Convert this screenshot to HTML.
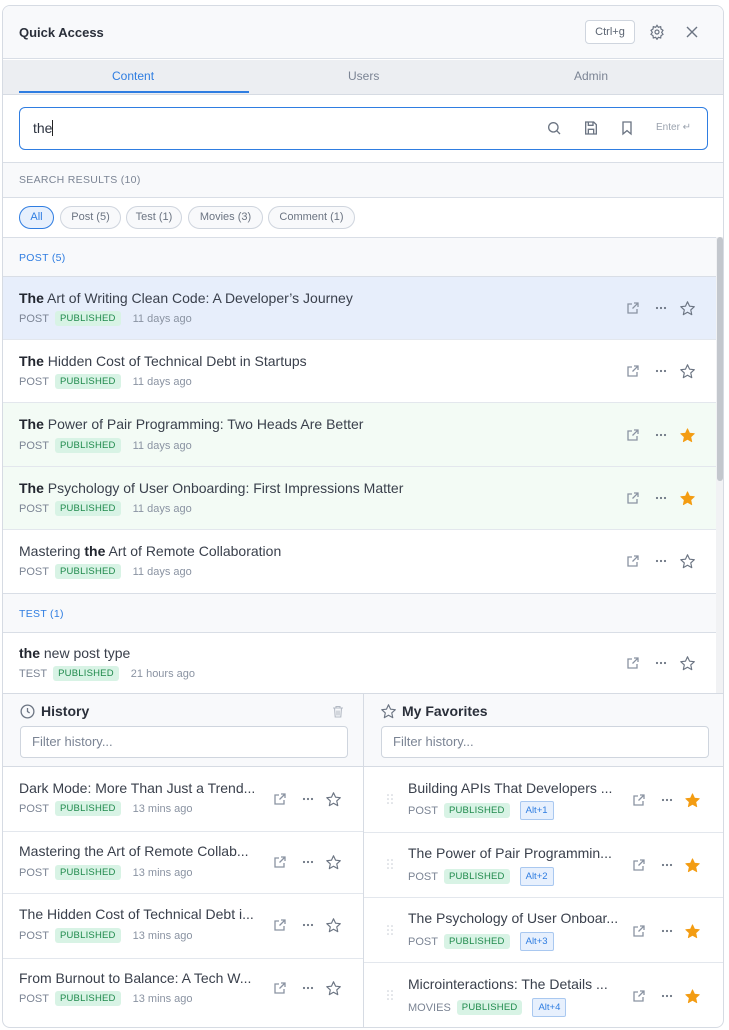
<!DOCTYPE html>
<html><head><meta charset="utf-8"><style>
*{box-sizing:border-box;margin:0;padding:0}
body{width:729px;height:1030px;background:#fff;font-family:"Liberation Sans",sans-serif;position:relative;overflow:hidden;color:#2d3340}
.panel{position:absolute;left:2px;top:5px;width:722px;height:1023px;border:1px solid #d6dbe3;border-radius:8px;overflow:hidden;background:#fff}
.a{position:absolute}
.hdr{left:0;top:0;width:720px;height:53px;background:#f8f9fb;border-bottom:1px solid #d9dee6}
.title{left:16px;top:19px;font-size:13px;font-weight:bold;color:#2a2f3a}
.kbd{left:582px;top:14px;width:50px;height:24px;border:1px solid #cfd5de;border-radius:4px;background:#fff;font-size:11px;color:#5b6472;text-align:center;line-height:23px}
.tabs{left:0;top:54px;width:720px;height:35px;background:#eceef2;border-bottom:1px solid #d6dbe3}
.tl{top:63px;font-size:12px;color:#7b8494}
.srch{left:16px;top:101px;width:689px;height:43px;border:1px solid #2f7de1;border-radius:6px;background:#fff}
.sec{left:0;width:720px;background:#f8f9fb;border-bottom:1px solid #d9dee6;border-top:1px solid #d9dee6}
.lbl{font-size:10.5px;letter-spacing:.3px;color:#7b8494}
.chip{top:200px;height:23px;border:1px solid #cfd5de;border-radius:12px;background:#f8f9fb;font-size:11px;color:#6b7482;line-height:21px;text-align:center}
.row{left:0;width:713px;border-bottom:1px solid #e3e7ed}
.t{position:absolute;font-size:14px;color:#3a404c;white-space:nowrap}
.t b{color:#22262f}
.m{position:absolute;font-size:11px;color:#7b8494;white-space:nowrap;display:flex;align-items:center}
.pub{background:#d8f3e5;color:#1f8a4c;font-size:9.5px;padding:2px 5px;border-radius:3px;margin-left:6px;letter-spacing:.2px}
.ago{margin-left:12px;color:#8a93a2}
.alt{border:1px solid #a9c8f0;background:#e7f0fd;color:#2f7de1;font-size:9.5px;padding:3px 5px;border-radius:2px;margin-left:10px}
svg{position:absolute}
.inp{height:32px;border:1px solid #cfd5de;border-radius:4px;background:#fff;font-size:13px;color:#7b8494;padding-left:11px;line-height:30px}
</style></head><body>
<div class="panel">
<div class="a hdr"></div>
<div class="a title">Quick Access</div>
<div class="a kbd">Ctrl+g</div>
<svg style="left:646px;top:18px" width="16" height="16" viewBox="0 0 24 24" fill="none" stroke="#6b7482" stroke-width="1.8"><circle cx="12" cy="12" r="3"/><path d="M12 2l2 3 3.5-1 .5 3.5 3 2-2 3 2 3-3 2-.5 3.5-3.5-1-2 3-2-3-3.5 1-.5-3.5-3-2 2-3-2-3 3-2 .5-3.5 3.5 1z"/></svg>
<svg style="left:683px;top:20px" width="12" height="12" viewBox="0 0 12 12" stroke="#6b7482" stroke-width="1.4"><path d="M1 1l10 10M11 1L1 11"/></svg>

<div class="a tabs"></div>
<div class="a tl" style="left:109px;color:#2f7de1">Content</div>
<div class="a" style="left:16px;top:85px;width:230px;height:2px;background:#2f7de1"></div>
<div class="a tl" style="left:345px">Users</div>
<div class="a tl" style="left:571px">Admin</div>

<div class="a srch"></div>
<div class="a" style="left:30px;top:114px;font-size:14px;color:#2d3340">the<span style="display:inline-block;width:1px;height:16px;background:#222;vertical-align:-3px"></span></div>
<svg style="left:543px;top:114px" width="16" height="16" viewBox="0 0 24 24" fill="none" stroke="#6b7482" stroke-width="2"><circle cx="11" cy="11" r="7"/><path d="M16 16l5 5"/></svg>
<svg style="left:580px;top:114px" width="16" height="16" viewBox="0 0 24 24" fill="none" stroke="#6b7482" stroke-width="2"><path d="M5 3h11l4 4v14H4V3z"/><path d="M8 3v5h7V3M8 21v-7h8v7"/></svg>
<svg style="left:616px;top:114px" width="16" height="16" viewBox="0 0 24 24" fill="none" stroke="#6b7482" stroke-width="2"><path d="M6 3h12v18l-6-5-6 5z"/></svg>
<div class="a" style="left:653px;top:116px;font-size:10px;color:#9aa2ae">Enter ↵</div>

<div class="a sec" style="top:156px;height:36px"></div>
<div class="a lbl" style="left:16px;top:168px">SEARCH RESULTS (10)</div>
<div class="a chip" style="left:16px;width:35px;border-color:#2f7de1;background:#e7f0fd;color:#2f7de1">All</div>
<div class="a chip" style="left:57px;width:61px">Post (5)</div>
<div class="a chip" style="left:123px;width:56px">Test (1)</div>
<div class="a chip" style="left:185px;width:75px">Movies (3)</div>
<div class="a chip" style="left:265px;width:87px">Comment (1)</div>

<div class="a sec" style="top:231px;height:40px;width:713px"></div>
<div class="a lbl" style="left:16px;top:246px;color:#2f7de1">POST (5)</div>

<div class="a row" style="top:271px;height:63px;background:#e7eefb"></div>
<div class="a row" style="top:334px;height:63px"></div>
<div class="a row" style="top:397px;height:64px;background:#f3fbf5"></div>
<div class="a row" style="top:461px;height:63px;background:#f3fbf5"></div>
<div class="a row" style="top:524px;height:63px;border-bottom:none"></div>

<div class="t" style="left:16px;top:284px"><b>The</b> Art of Writing Clean Code: A Developer’s Journey</div>
<div class="m" style="left:16px;top:305px">POST<span class="pub">PUBLISHED</span><span class="ago">11 days ago</span></div>
<div class="t" style="left:16px;top:347px"><b>The</b> Hidden Cost of Technical Debt in Startups</div>
<div class="m" style="left:16px;top:368px">POST<span class="pub">PUBLISHED</span><span class="ago">11 days ago</span></div>
<div class="t" style="left:16px;top:410px"><b>The</b> Power of Pair Programming: Two Heads Are Better</div>
<div class="m" style="left:16px;top:432px">POST<span class="pub">PUBLISHED</span><span class="ago">11 days ago</span></div>
<div class="t" style="left:16px;top:474px"><b>The</b> Psychology of User Onboarding: First Impressions Matter</div>
<div class="m" style="left:16px;top:495px">POST<span class="pub">PUBLISHED</span><span class="ago">11 days ago</span></div>
<div class="t" style="left:16px;top:537px">Mastering <b>the</b> Art of Remote Collaboration</div>
<div class="m" style="left:16px;top:558px">POST<span class="pub">PUBLISHED</span><span class="ago">11 days ago</span></div>

<div class="a sec" style="top:587px;height:40px;width:713px"></div>
<div class="a lbl" style="left:16px;top:602px;color:#2f7de1">TEST (1)</div>
<div class="a row" style="top:627px;height:60px;border-bottom:none"></div>
<div class="t" style="left:16px;top:639px"><b>the</b> new post type</div>
<div class="m" style="left:16px;top:660px">TEST<span class="pub">PUBLISHED</span><span class="ago">21 hours ago</span></div>

<div class="a" style="left:713px;top:231px;width:7px;height:456px;background:#f1f2f4"></div>
<div class="a" style="left:714px;top:231px;width:6px;height:244px;background:#c3c7cd;border-radius:3px"></div>

<svg width="0" height="0"><defs>
<symbol id="ext" viewBox="0 0 14 14"><path d="M11 8v4H2V3h4M8 2h4v4M12 2L6.5 7.5" fill="none" stroke="#8a93a2" stroke-width="1.3"/></symbol>
<symbol id="dots" viewBox="0 0 14 14"><circle cx="3" cy="7" r="1.1" fill="#6b7482"/><circle cx="7" cy="7" r="1.1" fill="#6b7482"/><circle cx="11" cy="7" r="1.1" fill="#6b7482"/></symbol>
<symbol id="star" viewBox="0 0 24 24"><path d="M12 2.5l2.9 6.2 6.7.7-5 4.6 1.4 6.7L12 17.3l-5.9 3.4 1.4-6.7-5-4.6 6.7-.7z" fill="none" stroke="#6b7482" stroke-width="1.6" stroke-linejoin="round"/></symbol>
<symbol id="starf" viewBox="0 0 24 24"><path d="M12 2.5l2.9 6.2 6.7.7-5 4.6 1.4 6.7L12 17.3l-5.9 3.4 1.4-6.7-5-4.6 6.7-.7z" fill="#f39c12" stroke="#f39c12" stroke-width="1.2" stroke-linejoin="round"/></symbol>
<symbol id="drag" viewBox="0 0 6 10"><g fill="#c5cad2"><circle cx="1" cy="1" r=".8"/><circle cx="5" cy="1" r=".8"/><circle cx="1" cy="5" r=".8"/><circle cx="5" cy="5" r=".8"/><circle cx="1" cy="9" r=".8"/><circle cx="5" cy="9" r=".8"/></g></symbol>
</defs></svg>

<svg style="left:623px;top:295px" width="14" height="14"><use href="#ext"/></svg><svg style="left:651px;top:295px" width="14" height="14"><use href="#dots"/></svg><svg style="left:676px;top:294px" width="17" height="17"><use href="#star"/></svg>
<svg style="left:623px;top:358px" width="14" height="14"><use href="#ext"/></svg><svg style="left:651px;top:358px" width="14" height="14"><use href="#dots"/></svg><svg style="left:676px;top:357px" width="17" height="17"><use href="#star"/></svg>
<svg style="left:623px;top:422px" width="14" height="14"><use href="#ext"/></svg><svg style="left:651px;top:422px" width="14" height="14"><use href="#dots"/></svg><svg style="left:676px;top:421px" width="17" height="17"><use href="#starf"/></svg>
<svg style="left:623px;top:485px" width="14" height="14"><use href="#ext"/></svg><svg style="left:651px;top:485px" width="14" height="14"><use href="#dots"/></svg><svg style="left:676px;top:484px" width="17" height="17"><use href="#starf"/></svg>
<svg style="left:623px;top:548px" width="14" height="14"><use href="#ext"/></svg><svg style="left:651px;top:548px" width="14" height="14"><use href="#dots"/></svg><svg style="left:676px;top:547px" width="17" height="17"><use href="#star"/></svg>
<svg style="left:623px;top:650px" width="14" height="14"><use href="#ext"/></svg><svg style="left:651px;top:650px" width="14" height="14"><use href="#dots"/></svg><svg style="left:676px;top:649px" width="17" height="17"><use href="#star"/></svg>

<div class="a" style="left:0;top:687px;width:720px;height:74px;background:#f8f9fb;border-top:1px solid #d6dbe3;border-bottom:1px solid #d6dbe3"></div>
<div class="a" style="left:360px;top:687px;width:1px;height:340px;background:#d6dbe3"></div>
<svg style="left:16px;top:697px" width="17" height="17" viewBox="0 0 24 24" fill="none" stroke="#6b7482" stroke-width="1.8"><circle cx="12" cy="12" r="9"/><path d="M12 7v5l3 2"/></svg>
<div class="a" style="left:38px;top:697px;font-size:14px;font-weight:bold;color:#2a2f3a">History</div>
<svg style="left:329px;top:699px" width="12" height="13" viewBox="0 0 12 13" fill="none" stroke="#b4bac4" stroke-width="1.1"><path d="M1 3h10M4 3V1.5h4V3M2.5 3l.7 9h5.6l.7-9M5 5.5v5M7 5.5v5"/></svg>
<div class="a inp" style="left:17px;top:720px;width:328px">Filter history...</div>
<svg style="left:377px;top:697px" width="17" height="17"><use href="#star"/></svg>
<div class="a" style="left:399px;top:697px;font-size:14px;font-weight:bold;color:#2a2f3a">My Favorites</div>
<div class="a inp" style="left:378px;top:720px;width:328px">Filter history...</div>

<div class="a" style="left:0;top:825px;width:360px;height:1px;background:#e3e7ed"></div>
<div class="a" style="left:0;top:887px;width:360px;height:1px;background:#e3e7ed"></div>
<div class="a" style="left:0;top:952px;width:360px;height:1px;background:#e3e7ed"></div>
<div class="a" style="left:361px;top:826px;width:360px;height:1px;background:#e3e7ed"></div>
<div class="a" style="left:361px;top:891px;width:360px;height:1px;background:#e3e7ed"></div>
<div class="a" style="left:361px;top:956px;width:360px;height:1px;background:#e3e7ed"></div>

<div class="t" style="left:16px;top:774px">Dark Mode: More Than Just a Trend...</div>
<div class="m" style="left:16px;top:795px">POST<span class="pub">PUBLISHED</span><span class="ago">13 mins ago</span></div>
<div class="t" style="left:16px;top:837px">Mastering the Art of Remote Collab...</div>
<div class="m" style="left:16px;top:859px">POST<span class="pub">PUBLISHED</span><span class="ago">13 mins ago</span></div>
<div class="t" style="left:16px;top:900px">The Hidden Cost of Technical Debt i...</div>
<div class="m" style="left:16px;top:922px">POST<span class="pub">PUBLISHED</span><span class="ago">13 mins ago</span></div>
<div class="t" style="left:16px;top:964px">From Burnout to Balance: A Tech W...</div>
<div class="m" style="left:16px;top:985px">POST<span class="pub">PUBLISHED</span><span class="ago">13 mins ago</span></div>

<svg style="left:270px;top:786px" width="14" height="14"><use href="#ext"/></svg><svg style="left:298px;top:786px" width="14" height="14"><use href="#dots"/></svg><svg style="left:322px;top:785px" width="17" height="17"><use href="#star"/></svg>
<svg style="left:270px;top:849px" width="14" height="14"><use href="#ext"/></svg><svg style="left:298px;top:849px" width="14" height="14"><use href="#dots"/></svg><svg style="left:322px;top:848px" width="17" height="17"><use href="#star"/></svg>
<svg style="left:270px;top:912px" width="14" height="14"><use href="#ext"/></svg><svg style="left:298px;top:912px" width="14" height="14"><use href="#dots"/></svg><svg style="left:322px;top:911px" width="17" height="17"><use href="#star"/></svg>
<svg style="left:270px;top:975px" width="14" height="14"><use href="#ext"/></svg><svg style="left:298px;top:975px" width="14" height="14"><use href="#dots"/></svg><svg style="left:322px;top:974px" width="17" height="17"><use href="#star"/></svg>

<div class="t" style="left:405px;top:774px">Building APIs That Developers ...</div>
<div class="m" style="left:405px;top:795px">POST<span class="pub">PUBLISHED</span><span class="alt">Alt+1</span></div>
<div class="t" style="left:405px;top:839px">The Power of Pair Programmin...</div>
<div class="m" style="left:405px;top:861px">POST<span class="pub">PUBLISHED</span><span class="alt">Alt+2</span></div>
<div class="t" style="left:405px;top:904px">The Psychology of User Onboar...</div>
<div class="m" style="left:405px;top:926px">POST<span class="pub">PUBLISHED</span><span class="alt">Alt+3</span></div>
<div class="t" style="left:405px;top:970px">Microinteractions: The Details ...</div>
<div class="m" style="left:405px;top:992px">MOVIES<span class="pub">PUBLISHED</span><span class="alt">Alt+4</span></div>

<svg style="left:384px;top:788px" width="6" height="10"><use href="#drag"/></svg>
<svg style="left:384px;top:853px" width="6" height="10"><use href="#drag"/></svg>
<svg style="left:384px;top:919px" width="6" height="10"><use href="#drag"/></svg>
<svg style="left:384px;top:984px" width="6" height="10"><use href="#drag"/></svg>

<svg style="left:629px;top:787px" width="14" height="14"><use href="#ext"/></svg><svg style="left:657px;top:787px" width="14" height="14"><use href="#dots"/></svg><svg style="left:681px;top:786px" width="17" height="17"><use href="#starf"/></svg>
<svg style="left:629px;top:852px" width="14" height="14"><use href="#ext"/></svg><svg style="left:657px;top:852px" width="14" height="14"><use href="#dots"/></svg><svg style="left:681px;top:851px" width="17" height="17"><use href="#starf"/></svg>
<svg style="left:629px;top:918px" width="14" height="14"><use href="#ext"/></svg><svg style="left:657px;top:918px" width="14" height="14"><use href="#dots"/></svg><svg style="left:681px;top:917px" width="17" height="17"><use href="#starf"/></svg>
<svg style="left:629px;top:983px" width="14" height="14"><use href="#ext"/></svg><svg style="left:657px;top:983px" width="14" height="14"><use href="#dots"/></svg><svg style="left:681px;top:982px" width="17" height="17"><use href="#starf"/></svg>
</div>
</body></html>
